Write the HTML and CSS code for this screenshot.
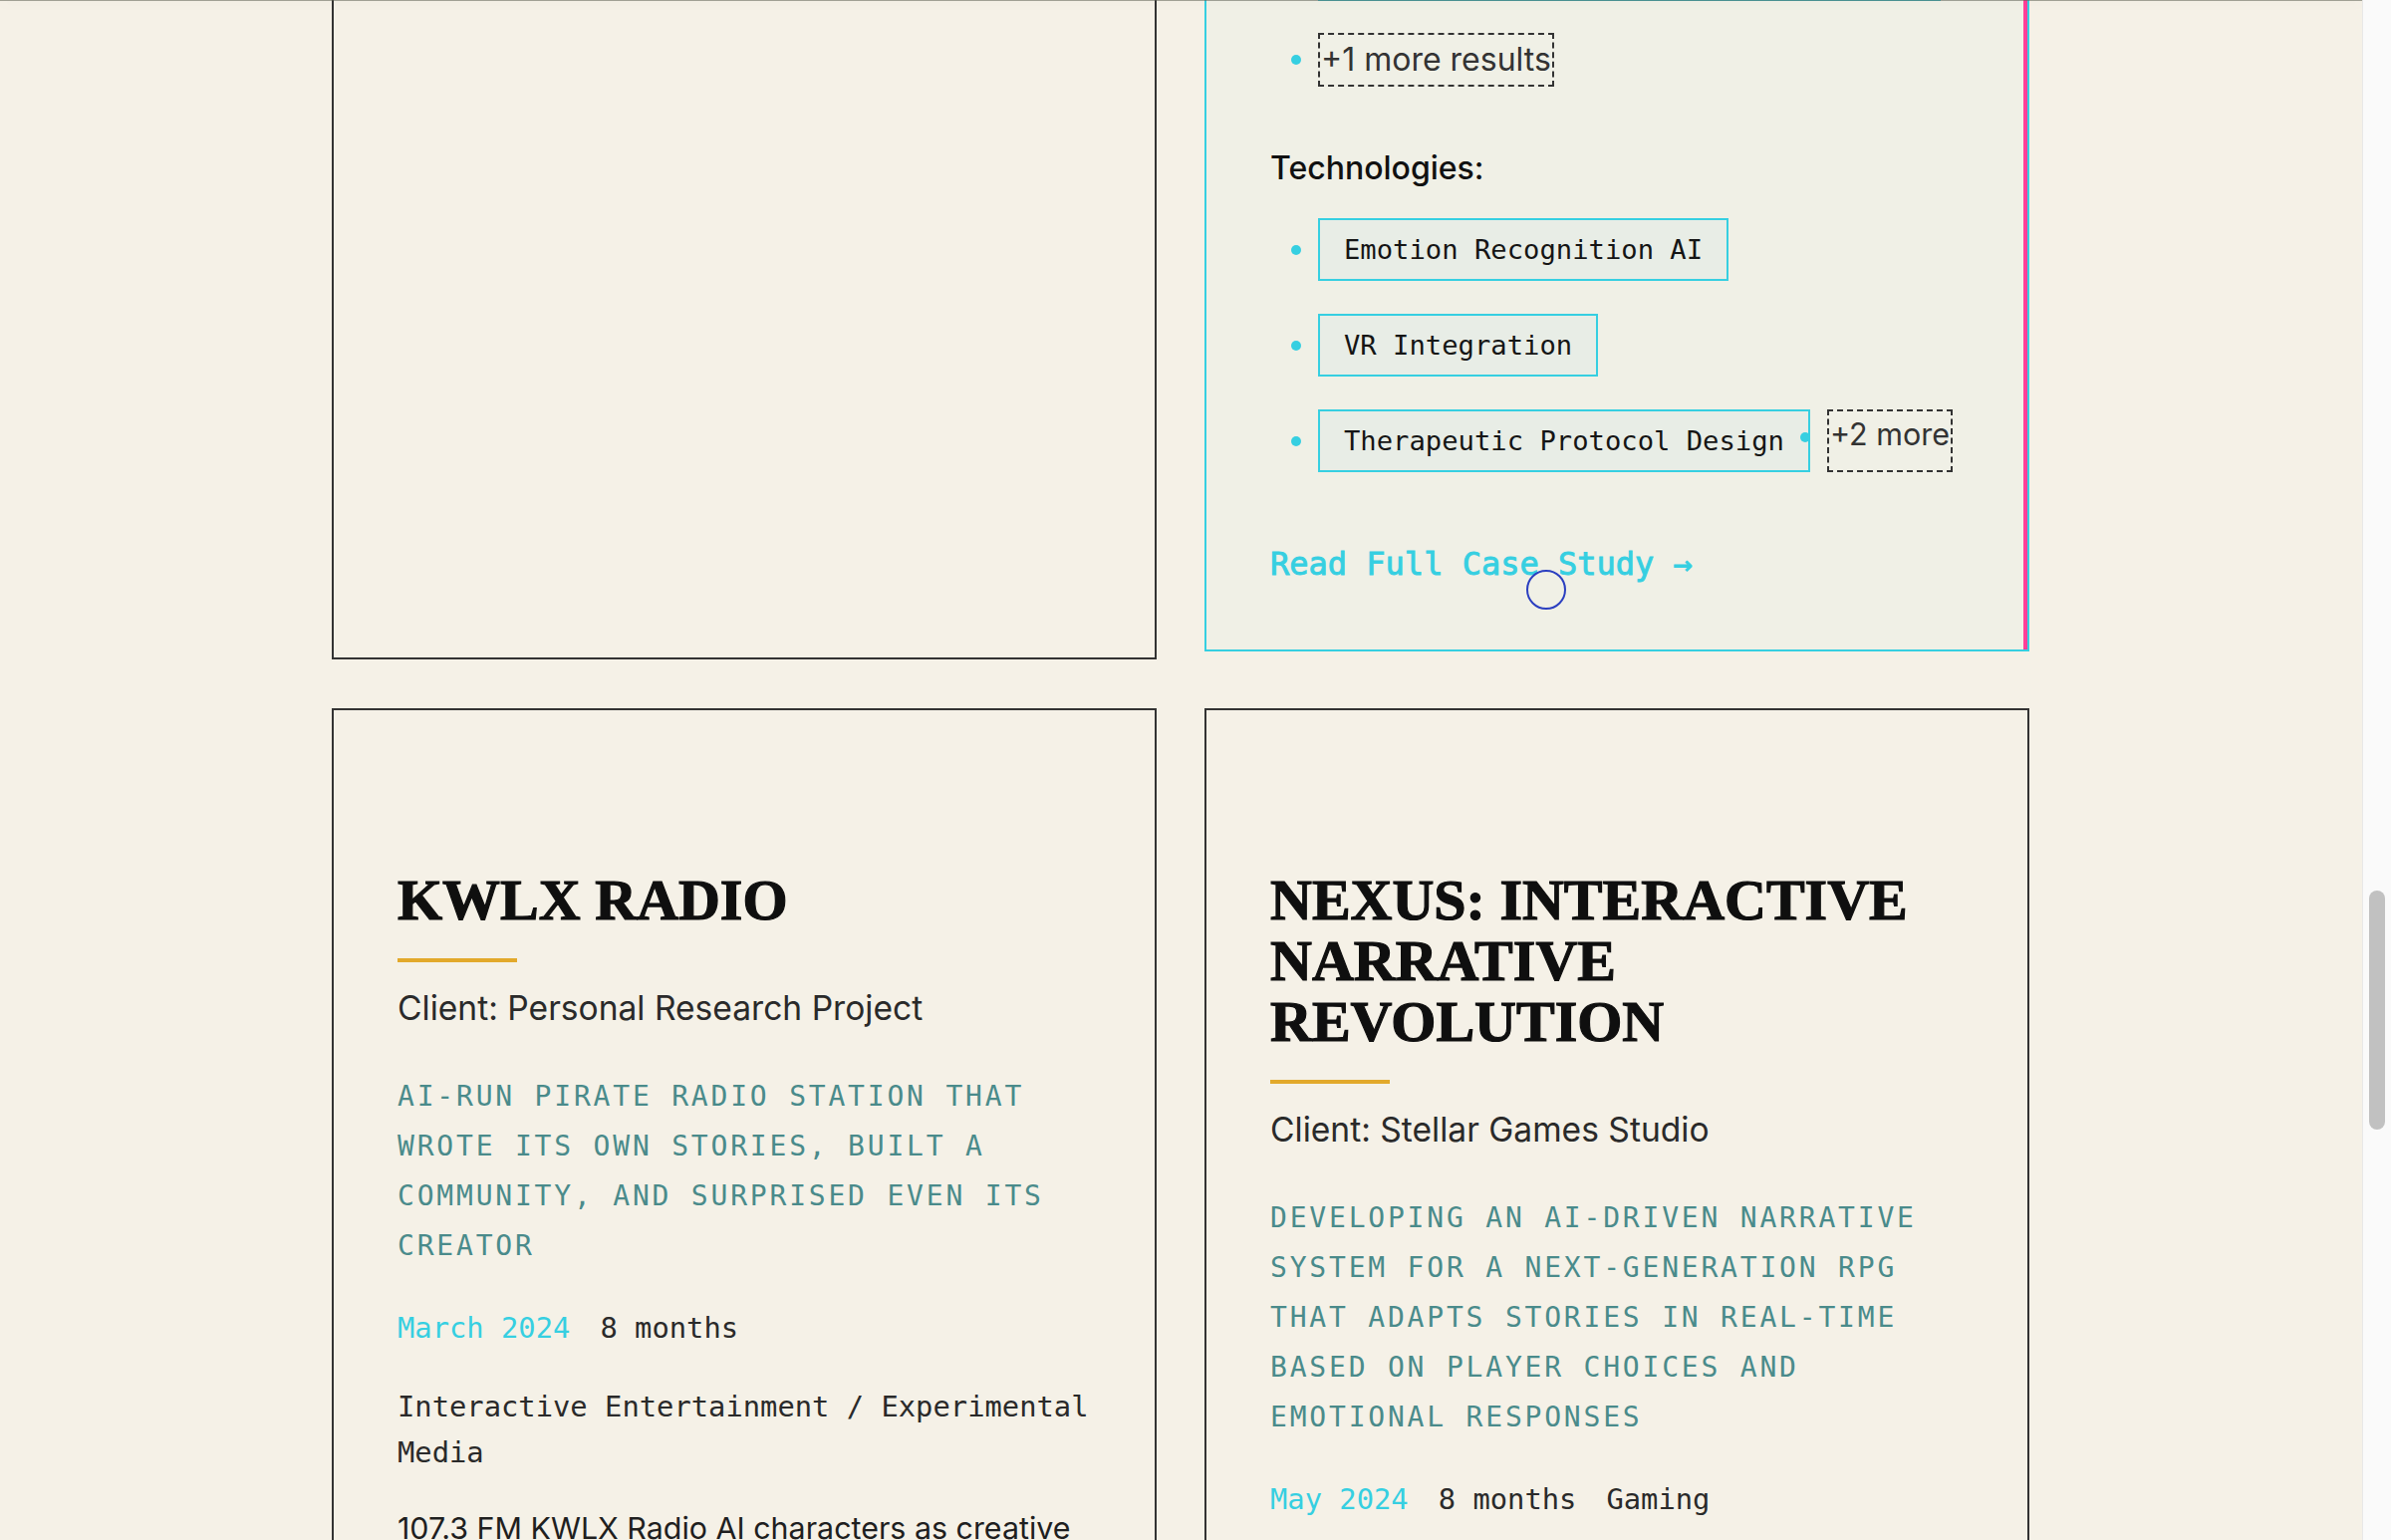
FILE: index.html
```html
<!DOCTYPE html>
<html lang="en">
<head>
<meta charset="utf-8">
<title>Case Studies</title>
<link rel="stylesheet" href="styles.css">
</head>
<body>
<div class="viewport">
  <main class="main">
    <div class="header-edge"></div>
    <section class="case-grid">
      <article class="case-card"></article>

      <article class="case-card is-active">
        <ul class="bullet-list results">
          <li><span class="chip">Increased patient engagement by 60%</span></li>
          <li><span class="more more-results">+1 more results</span></li>
        </ul>
        <h4 class="tech-heading">Technologies:</h4>
        <ul class="bullet-list tech-list">
          <li><span class="chip">Emotion Recognition AI</span></li>
          <li><span class="chip">VR Integration</span></li>
          <li><span class="chip">Therapeutic Protocol Design</span><span class="more more-tech">+2 more</span></li>
        </ul>
        <a class="case-link" href="#">Read Full Case Study →</a>
      </article>

      <article class="case-card">
        <h3 class="case-title">KWLX Radio</h3>
        <div class="case-rule"></div>
        <p class="case-client">Client: Personal Research Project</p>
        <p class="case-summary">AI-run pirate radio station that wrote its own stories, built a community, and surprised even its creator</p>
        <div class="case-meta">
          <span class="case-date">March 2024</span>
          <span>8 months</span>
          <span>Interactive Entertainment / Experimental Media</span>
        </div>
        <p class="case-body">107.3 FM KWLX Radio AI characters as creative collaborators in an experimental broadcast.</p>
      </article>

      <article class="case-card">
        <h3 class="case-title">Nexus: Interactive Narrative Revolution</h3>
        <div class="case-rule"></div>
        <p class="case-client">Client: Stellar Games Studio</p>
        <p class="case-summary">Developing an AI-driven narrative system for a next-generation RPG that adapts stories in real-time based on player choices and emotional responses</p>
        <div class="case-meta">
          <span class="case-date">May 2024</span>
          <span>8 months</span>
          <span>Gaming</span>
        </div>
        <p class="case-body">A dynamic storytelling engine that reshapes quests around every player.</p>
      </article>
    </section>
    <div class="cursor-ring"></div>
  </main>
  <div class="scrollbar"><div class="scrollbar-thumb"></div></div>
</div>
</body>
</html>
```

FILE: styles.css
```css
html, body {
  margin: 0;
  padding: 0;
  height: 100%;
}

body {
  background: #f5f1e7;
  font-family: Inter, "Noto Sans", sans-serif;
  color: #2a2a2a;
  overflow: hidden;
}

.viewport {
  display: flex;
  height: 1546px;
}

.main {
  flex: 1;
  position: relative;
  overflow: hidden;
}

.header-edge {
  position: absolute;
  top: 0;
  left: 0;
  right: 0;
  height: 1px;
  background: rgba(90, 92, 80, 0.55);
  box-shadow: 0 2px 12px rgba(60, 60, 40, 0.12);
  z-index: 5;
}

.case-grid {
  width: 1704px;
  margin: -216px 0 0 333px;
  display: grid;
  grid-template-columns: 828px 828px;
  gap: 49px 48px;
}

.case-card {
  border: 2px solid #333;
  background: #f5f1e7;
  padding: 160px 64px 64px;
  min-width: 0;
}

.case-card.is-active {
  border-color: #36cfe1;
  background: #f0f0e6;
  box-shadow: inset -4px 0 0 #ff3f98;
  transform: translateY(-8px);
}

.bullet-list {
  list-style: none;
  margin: 0;
  padding: 0 0 0 48px;
  display: flex;
  flex-direction: column;
  gap: 32px;
}

.tech-list {
  gap: 33px;
}

.bullet-list li {
  display: flex;
  align-items: center;
}

.bullet-list li::before {
  content: "";
  flex: none;
  width: 10px;
  height: 10px;
  border-radius: 50%;
  background: #36cfe1;
  margin-left: -27px;
  margin-right: 17px;
}

.chip {
  font-family: "DejaVu Sans Mono", "Liberation Mono", monospace;
  font-size: 27.2px;
  line-height: 35px;
  padding: 12px 24px;
  border: 2px solid #36cfe1;
  background: #e8ede6;
  color: #151515;
  white-space: nowrap;
}

.more {
  font-family: Inter, "Noto Sans", sans-serif;
  font-size: 32px;
  line-height: 38px;
  color: #333;
  border: 2px dashed #333;
  white-space: nowrap;
}

.more-results {
  padding: 6px 1px;
}

.more-tech {
  position: relative;
  align-self: stretch;
  font-size: 30.5px;
  padding: 4px 1px;
  margin-left: 17px;
}

.more-tech::before {
  content: "";
  position: absolute;
  left: -29px;
  top: 21px;
  width: 10px;
  height: 10px;
  border-radius: 50%;
  background: #36cfe1;
}

.tech-heading {
  font-size: 32px;
  font-weight: 500;
  line-height: 38px;
  margin: 63px 0 31px;
  color: #111;
}

.case-link {
  display: block;
  margin-top: 70px;
  font-family: "DejaVu Sans Mono", "Liberation Mono", monospace;
  font-size: 32px;
  font-weight: 400;
  -webkit-text-stroke: 0.9px #36cfe1;
  line-height: 44px;
  color: #36cfe1;
  text-decoration: none;
}

.case-title {
  font-family: "Liberation Serif", "DejaVu Serif", serif;
  font-weight: 700;
  font-size: 58px;
  line-height: 61px;
  margin: 0;
  color: #0f0f0f;
  -webkit-text-stroke: 1.2px #0f0f0f;
  text-transform: uppercase;
}

.case-rule {
  width: 120px;
  height: 4px;
  background: #e2a92b;
  margin-top: 28px;
}

.case-client {
  font-size: 33.6px;
  line-height: 51px;
  margin: 20px 0 0;
  color: #2a2a2a;
}

.case-summary {
  font-family: "DejaVu Sans Mono", "Liberation Mono", monospace;
  font-size: 28px;
  letter-spacing: 2.8px;
  line-height: 50px;
  text-transform: uppercase;
  color: #4a8b8b;
  margin: 39px 0 0;
}

.case-meta {
  display: flex;
  flex-wrap: wrap;
  gap: 33px 30px;
  margin-top: 34px;
  font-family: "DejaVu Sans Mono", "Liberation Mono", monospace;
  font-size: 28.8px;
  line-height: 46px;
  color: #2a2a2a;
}

.case-date {
  color: #36cfe1;
}

.case-body {
  font-size: 30.4px;
  line-height: 51.2px;
  margin: 28px 0 0;
  color: #1f1f1f;
}

.cursor-ring {
  position: absolute;
  left: 1532px;
  top: 572px;
  width: 36px;
  height: 36px;
  border: 2px solid #2b3fc0;
  border-radius: 50%;
  pointer-events: none;
  z-index: 6;
}

.scrollbar {
  flex: none;
  width: 28px;
  background: #fafafa;
  border-left: 1px solid #e8e8e8;
}

.scrollbar-thumb {
  margin: 894px 0 0 6px;
  width: 16px;
  height: 240px;
  background: #c1c1c1;
  border-radius: 8px;
}
```
